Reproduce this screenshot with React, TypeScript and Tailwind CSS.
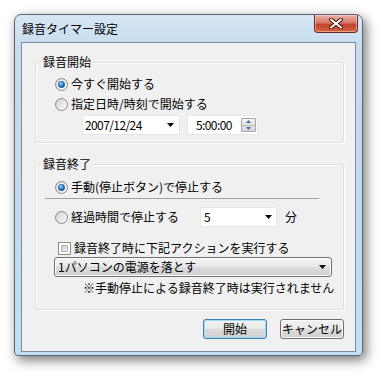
import React, { useId } from 'react';

const Radio: React.FC<{ checked?: boolean }> = ({ checked }) => {
  const id = useId().replace(/:/g, '');
  return (
    <svg width="13" height="13" viewBox="0 0 13 13" className="shrink-0">
      <defs>
        <linearGradient id={`rb${id}`} x1="0" y1="0" x2="1" y2="1">
          <stop offset="0" stopColor="#cfcfcf" />
          <stop offset="1" stopColor="#ffffff" />
        </linearGradient>
        <radialGradient id={`rd${id}`} cx="0.4" cy="0.35" r="0.7">
          <stop offset="0" stopColor="#9fe0ff" />
          <stop offset="0.5" stopColor="#2e8ad8" />
          <stop offset="1" stopColor="#0a4d8c" />
        </radialGradient>
      </defs>
      <circle cx="6.5" cy="6.5" r="6" fill={`url(#rb${id})`} stroke="#8a8a8a" strokeWidth="1" />
      {checked && (
        <>
          <circle cx="6.5" cy="6.5" r="4.2" fill="#ffffff" />
          <circle cx="6.5" cy="6.5" r="3.2" fill={`url(#rd${id})`} stroke="#15497a" strokeWidth="0.6" />
        </>
      )}
    </svg>
  );
};

const Check: React.FC = () => (
  <div className="w-[13px] h-[13px] shrink-0 border border-[#8e8f8f] bg-white p-[2px]">
    <div className="w-full h-full bg-gradient-to-br from-[#cbcbcb] to-[#f4f4f4] border border-[#b5b5b5]" />
  </div>
);

const Arrow: React.FC = () => (
  <svg width="7" height="4" viewBox="0 0 7 4" className="shrink-0">
    <path d="M0 0h7L3.5 4z" fill="#000" />
  </svg>
);

const GroupBox: React.FC<{ label: string; className?: string; children: React.ReactNode }> = ({ label, className, children }) => (
  <div className={`relative w-[309px] rounded-[3px] border border-[#d5dfe5] shadow-[inset_1px_1px_0_#ffffff,1px_1px_0_#ffffff] ${className ?? ''}`}>
    <span className="absolute left-[5px] -top-[9px] bg-[#f0f0f0] px-[2px] leading-[16px]">{label}</span>
    {children}
  </div>
);

const VistaButton: React.FC<{ label: string; primary?: boolean }> = ({ label, primary }) => (
  <button
    className={`w-[64px] h-[20px] rounded-[3px] border leading-[16px] text-[12px] bg-[linear-gradient(#f2f2f2_0%,#ebebeb_45%,#dddddd_50%,#cfcfcf_100%)] ${
      primary ? 'border-[#3c7fb1] shadow-[inset_0_0_0_1px_#9fdcfa]' : 'border-[#707070] shadow-[inset_0_0_0_1px_#fbfbfb]'
    }`}
  >
    {label}
  </button>
);

export default function App() {
  return (
    <div className="w-[381px] h-[377px] bg-white pl-[14px] pt-[14px] font-['Noto_Sans_CJK_JP','Noto_Sans',sans-serif] text-[12px] text-black">
      <div className="w-[349px] h-[342px] flex flex-col rounded-t-[7px] rounded-b-[4px] border border-[#5d6673] bg-[linear-gradient(#d6e6f4_0%,#c6dcef_10%,#c2daef_60%,#bfe0f4_100%)] shadow-[3px_4px_12px_rgba(0,0,0,0.55)]">
        {/* title bar */}
        <div className="h-[27px] flex justify-between items-start pl-[7px] pr-[4px] shrink-0">
          <span className="mt-[5px] leading-[18px] text-[12px]">録音タイマー設定</span>
          <div className="w-[44px] h-[18px] flex items-center justify-center rounded-b-[4px] border border-t-0 border-[#6b2a22] bg-[linear-gradient(#eab3a6_0%,#d47a6a_45%,#c2432e_55%,#d4623c_100%)] shadow-[inset_0_0_0_1px_rgba(255,220,210,0.5)]">
            <svg width="14" height="11" viewBox="0 0 14 11">
              <path d="M2 1.5L12 9.5M12 1.5L2 9.5" stroke="#4a1a14" strokeWidth="4" strokeLinecap="round" />
              <path d="M2 1.5L12 9.5M12 1.5L2 9.5" stroke="#ffffff" strokeWidth="2" strokeLinecap="round" />
            </svg>
          </div>
        </div>

        {/* client area */}
        <div className="mx-[6px] mb-[3px] flex-1 border border-[#7d8a9c] bg-[#f0f0f0] pl-[13px] pt-[19px] flex flex-col">
          <GroupBox label="録音開始">
            <div className="flex flex-col pt-[13px] pb-[7px]">
              <div className="h-[16px] flex items-center gap-[3px] pl-[19px]">
                <Radio checked />
                <span>今すぐ開始する</span>
              </div>
              <div className="h-[16px] mt-[4px] flex items-center gap-[3px] pl-[19px]">
                <Radio />
                <span>指定日時/時刻で開始する</span>
              </div>
              <div className="h-[20px] mt-[3px] flex gap-[7px] pl-[46px]">
                <div className="w-[98px] h-[20px] border border-[#e3e6eb] bg-white flex items-center justify-between pl-[2px] pr-[5px]">
                  <span className="tracking-[-0.6px]">2007/12/24</span>
                  <Arrow />
                </div>
                <div className="w-[71px] h-[20px] border border-[#e3e6eb] bg-white flex items-center justify-between pl-[7px] pr-[1px]">
                  <span className="ml-[1px] tracking-[-0.6px]">5:00:00</span>
                  <div className="w-[15px] h-[14px] flex flex-col border border-[#a7a7a7] rounded-[1px]">
                    <div className="flex-1 flex items-center justify-center bg-[linear-gradient(#f4f4f4,#e2e2e2)] border-b border-[#bdbdbd]">
                      <svg width="5" height="3" viewBox="0 0 5 3"><path d="M0 3h5L2.5 0z" fill="#4a6aa8" /></svg>
                    </div>
                    <div className="flex-1 flex items-center justify-center bg-[linear-gradient(#e2e2e2,#d6d6d6)]">
                      <svg width="5" height="3" viewBox="0 0 5 3"><path d="M0 0h5L2.5 3z" fill="#4a6aa8" /></svg>
                    </div>
                  </div>
                </div>
              </div>
            </div>
          </GroupBox>

          <GroupBox label="録音終了" className="mt-[21px]">
            <div className="flex flex-col pt-[14px] pb-[13px]">
              <div className="h-[16px] flex items-center gap-[3px] pl-[19px]">
                <Radio checked />
                <span>手動(停止ボタン)で停止する</span>
              </div>
              <div className="ml-[9px] mt-[3px] w-[274px] h-px bg-[#a0a0a0]" />
              <div className="h-[20px] mt-[8px] flex items-center pl-[19px]">
                <Radio />
                <span className="ml-[3px] w-[129px]">経過時間で停止する</span>
                <div className="w-[77px] h-[20px] border border-[#e3e6eb] bg-white flex items-center justify-between pl-[3px] pr-[4px]">
                  <span>5</span>
                  <Arrow />
                </div>
                <span className="ml-[8px]">分</span>
              </div>
              <div className="h-[16px] mt-[13px] flex items-center gap-[3px] pl-[22px]">
                <Check />
                <span>録音終了時に下記アクションを実行する</span>
              </div>
              <div className="ml-[18px] mt-[1px] w-[278px] h-[20px] rounded-[3px] border border-[#707070] bg-[linear-gradient(#f2f2f2_0%,#ebebeb_45%,#dddddd_50%,#cfcfcf_100%)] shadow-[inset_0_0_0_1px_#fbfbfb] flex items-center justify-between pl-[3px] pr-[5px]">
                <span className="leading-[16px]">1パソコンの電源を落とす</span>
                <Arrow />
              </div>
              <div className="h-[16px] mt-[3px] pl-[47px] flex items-center">
                <span>※手動停止による録音終了時は実行されません</span>
              </div>
            </div>
          </GroupBox>

          <div className="w-[309px] mt-[9px] flex justify-end gap-[13px]">
            <VistaButton label="開始" primary />
            <VistaButton label="キャンセル" />
          </div>
        </div>
      </div>
    </div>
  );
}
